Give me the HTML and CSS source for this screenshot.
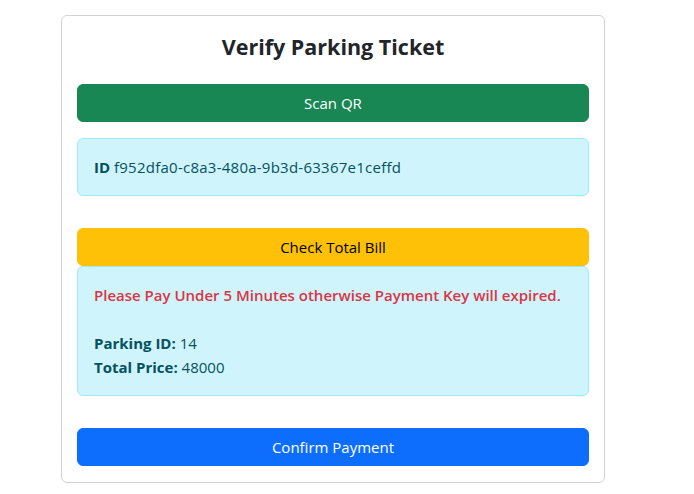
FILE: index.html
```html
<!DOCTYPE html>
<html lang="en">
<head>
<meta charset="utf-8">
<title>Verify Parking Ticket</title>
<link rel="stylesheet" href="styles.css">
</head>
<body>
<div class="page">
  <div class="card">
    <h3 class="title">Verify Parking Ticket</h3>
    <button class="btn btn-success">Scan QR</button>
    <div class="alert alert-info id-alert"><b>ID</b> <span class="uuid">f952dfa0-c8a3-480a-9b3d-63367e1ceffd</span></div>
    <button class="btn btn-warning">Check Total Bill</button>
    <div class="alert alert-info bill-alert">
      <p class="warn">Please Pay Under 5 Minutes otherwise Payment Key will expired.</p>
      <p class="blank"></p>
      <p class="line"><b>Parking ID:</b> 14</p>
      <p class="line"><b>Total Price:</b> 48000</p>
    </div>
    <button class="btn btn-primary">Confirm Payment</button>
  </div>
</div>
</body>
</html>
```
FILE: styles.css
```css
* { box-sizing: border-box; }
html, body { margin: 0; padding: 0; background: #fff; }
body {
  font-family: "Open Sans", "Noto Sans", sans-serif;
  font-size: 15px;
  line-height: 24px;
  color: #212529;
}
.page { padding: 15px 0 0 61px; }
.card {
  width: 544px;
  border: 1px solid rgba(0,0,0,.175);
  border-radius: 6px;
  padding: 16px 15px 16px 15px;
  display: flex;
  flex-direction: column;
}
.title {
  margin: 0 0 22px;
  text-align: center;
  font-size: 21.5px;
  line-height: 30px;
  font-weight: 700;
  color: #212529;
}
.btn {
  display: block;
  width: 100%;
  height: 38px;
  border: 1px solid transparent;
  border-radius: 6px;
  font-family: inherit;
  font-size: 15px;
  line-height: 24px;
  padding: 6px 12px;
  text-align: center;
}
.btn-success { background: #198754; border-color: #198754; color: #fff; }
.btn-warning { background: #ffc107; border-color: #ffc107; color: #000; }
.btn-primary { background: #0d6efd; border-color: #0d6efd; color: #fff; }
.alert {
  border: 1px solid #9eeaf9;
  background: #cff4fc;
  color: #055160;
  border-radius: 6px;
  padding: 16px;
}
.id-alert { margin: 16px 0 32px; height: 58px; padding-top: 16px; }
.uuid { letter-spacing: 0.25px; }
.bill-alert { margin: 0 0 32px; height: 130px; }
.alert b { font-weight: 700; }
.alert p { margin: 0; height: 24px; }
.warn { color: #dc3545; font-weight: 600; }
```
